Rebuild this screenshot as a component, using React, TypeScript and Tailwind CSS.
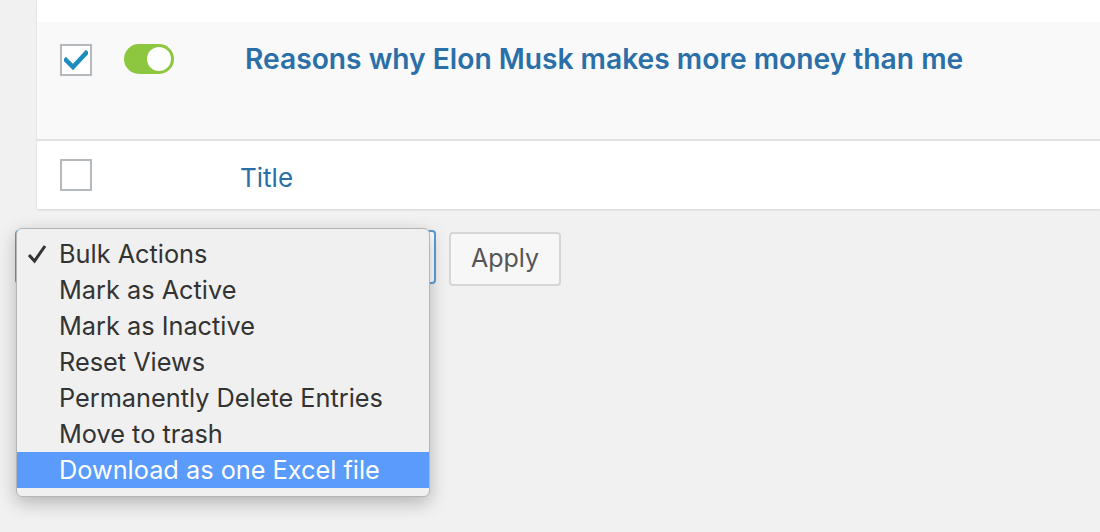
const items = [
  "Bulk Actions",
  "Mark as Active",
  "Mark as Inactive",
  "Reset Views",
  "Permanently Delete Entries",
  "Move to trash",
  "Download as one Excel file",
];

export default function App() {
  return (
    <div
      className="relative h-[532px] w-[1100px] overflow-hidden bg-[#f1f1f1]"
      style={{ fontFamily: 'Inter, "Liberation Sans", Arial, sans-serif' }}
    >
      <div className="ml-[37px] bg-white shadow-[0_1px_2px_rgba(0,0,0,0.12)]">
        <div className="h-[22px] bg-white" />
        <div className="flex h-[119px] items-start border-b-2 border-[#e1e1e1] bg-[#f9f9f9] pt-[22px]">
          <div className="ml-[23px] flex h-[32px] w-[32px] items-center justify-center border-2 border-[#b4b9be] bg-white">
            <svg width="24" height="20" viewBox="0 0 24 20">
              <path d="M2 10 L9 17 L22 3" fill="none" stroke="#1e8cbe" strokeWidth="4.5" strokeLinecap="square" />
            </svg>
          </div>
          <div className="ml-[32px] flex h-[30px] w-[50px] items-center justify-end rounded-full bg-[#8dc63f] pr-[3px]">
            <div className="h-[24px] w-[24px] rounded-full bg-white" />
          </div>
          <a className="ml-[71px] mt-[-2px] text-[28.2px] font-semibold leading-[34px] text-[#2a6fa8]">
            Reasons why Elon Musk makes more money than me
          </a>
        </div>
        <div className="flex h-[68px] items-center">
          <div className="ml-[23px] h-[32px] w-[32px] border-2 border-[#b4b9be] bg-white" />
          <a className="ml-[148px] mt-[4px] text-[26px] text-[#2a6fa8]">Title</a>
        </div>
      </div>

      <div className="mt-[21px] flex items-start">
        <div className="ml-[15px] h-[54px] w-[421px] rounded-[4px] border-2 border-[#5b9dd9] bg-white" />
        <button className="ml-[13px] mt-[2px] h-[54px] w-[112px] rounded-[4px] border-2 border-[#d6d6d6] bg-[#f7f7f7] text-[25px] text-[#555]">
          Apply
        </button>
      </div>

      <div className="absolute left-[16px] top-[228px] w-[414px] rounded-[6px] border border-[#b5b5b5] bg-[#f0f0f0] pb-[8px] pt-[7px] shadow-[0_6px_18px_rgba(0,0,0,0.25)]">
        {items.map((t, i) => (
          <div
            key={t}
            className={
              "flex h-[36px] items-center text-[25.3px] " +
              (i === items.length - 1 ? "bg-[#5a9bfc] text-white" : "text-[#333]")
            }
          >
            <span className="flex w-[42px] pl-[10px]">
              {i === 0 && (
                <svg width="20" height="20" viewBox="0 0 20 20">
                  <path d="M2 11 L7.5 17 L18 2" fill="none" stroke="#333" strokeWidth="3" />
                </svg>
              )}
            </span>
            <span>{t}</span>
          </div>
        ))}
      </div>
    </div>
  );
}
